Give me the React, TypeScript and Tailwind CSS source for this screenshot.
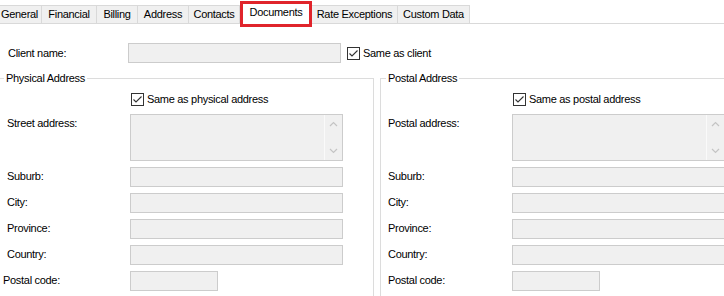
import { ReactNode } from 'react'

const tabs = [
  { name: 'General', w: 'w-[45px] -ml-[3px] border-l' },
  { name: 'Financial', w: 'w-[55px]' },
  { name: 'Billing', w: 'w-[41px]' },
  { name: 'Address', w: 'w-[51px]' },
  { name: 'Contacts', w: 'w-[51px]' },
  { name: 'Documents', w: 'w-[72px]', active: true },
  { name: 'Rate Exceptions', w: 'w-[86px]' },
  { name: 'Custom Data', w: 'w-[72px]' },
]

function Check({ label }: { label: string }) {
  return (
    <div className="flex items-center gap-[3px]">
      <span className="flex h-[13px] w-[13px] items-center justify-center border border-[#333333] bg-white">
        <svg width="11" height="11" viewBox="0 0 11 11">
          <polyline points="1.5,5.5 4,8 9.5,2.5" fill="none" stroke="#333333" strokeWidth="1.1" />
        </svg>
      </span>
      <span>{label}</span>
    </div>
  )
}

function Box({ w = 'w-[213px]' }: { w?: string }) {
  return <div className={`h-[20px] ${w} border border-[#cccccc] bg-[#f0f0f0]`} />
}

function Row({ label, pad, children, className = '' }: { label: string; pad: string; children: ReactNode; className?: string }) {
  return (
    <div className={`flex ${className}`}>
      <div className={`flex h-[20px] w-[131px] shrink-0 items-center ${pad}`}>{label}</div>
      {children}
    </div>
  )
}

function AddressGroup({ title, check, first, side }: { title: string; check: string; first: string; side: 'left' | 'right' }) {
  const pad = side === 'left' ? 'pl-[8px]' : 'pl-[7px]'
  return (
    <fieldset
      className={`min-w-0 shrink-0 border-[#dcdcdc] pb-[12px] ${
        side === 'left' ? '-ml-px w-[375px] border-t border-r' : 'ml-[6px] w-[360px] border-t border-l'
      }`}
    >
      <legend className="ml-[5px] px-[2px] leading-[14px]">{title}</legend>
      <div className="flex flex-col">
        <div className="mt-[6px] flex pl-[132px]">
          <Check label={check} />
        </div>
        <Row label={first} pad={pad} className="mt-[6px]">
          <div className="flex h-[47px] w-[213px] border border-[#cccccc] bg-[#f0f0f0]">
            <div className="flex-1" />
            <div className="flex w-[18px] flex-col items-center justify-between border-l border-[#fafafa] py-[6px]">
              <svg width="9" height="6" viewBox="0 0 9 6">
                <polyline points="1,5 4.5,1.5 8,5" fill="none" stroke="#c4c4c4" strokeWidth="1.2" />
              </svg>
              <svg width="9" height="6" viewBox="0 0 9 6">
                <polyline points="1,1 4.5,4.5 8,1" fill="none" stroke="#c4c4c4" strokeWidth="1.2" />
              </svg>
            </div>
          </div>
        </Row>
        <div className="mt-[6px] flex flex-col gap-[6px]">
          {['Suburb:', 'City:', 'Province:', 'Country:'].map((l) => (
            <Row key={l} label={l} pad={pad}>
              <Box />
            </Row>
          ))}
          <Row label="Postal code:" pad={side === 'left' ? 'pl-[4px]' : pad}>
            <Box w="w-[88px]" />
          </Row>
        </div>
      </div>
    </fieldset>
  )
}

export default function App() {
  return (
    <div className="h-[296px] w-[724px] overflow-hidden bg-white font-['Liberation_Sans',Arial,sans-serif] text-[11px] tracking-[-0.3px] text-black">
      <div className="flex h-[24px] items-end border-b border-[#d9d9d9]">
        {tabs.map((t) =>
          t.active ? (
            <div
              key={t.name}
              className={`relative z-10 -mb-px flex h-[22px] ${t.w} items-center justify-center bg-white pb-[2px]`}
            >
              {t.name}
              <div className="absolute -top-px -bottom-[3px] left-0 right-0 border-[3px] border-[#e0242b]" />
            </div>
          ) : (
            <div
              key={t.name}
              className={`flex h-[18px] ${t.w} shrink-0 items-center justify-center border-t border-r border-[#d9d9d9] bg-[#f0f0f0]`}
            >
              {t.name}
            </div>
          )
        )}
      </div>

      <div className="mt-[19px] flex items-center">
        <div className="w-[128px] pl-[8px]">Client name:</div>
        <Box />
        <div className="ml-[6px]">
          <Check label="Same as client" />
        </div>
      </div>

      <div className="mt-[8px] flex">
        <AddressGroup title="Physical Address" check="Same as physical address" first="Street address:" side="left" />
        <AddressGroup title="Postal Address" check="Same as postal address" first="Postal address:" side="right" />
      </div>
    </div>
  )
}
